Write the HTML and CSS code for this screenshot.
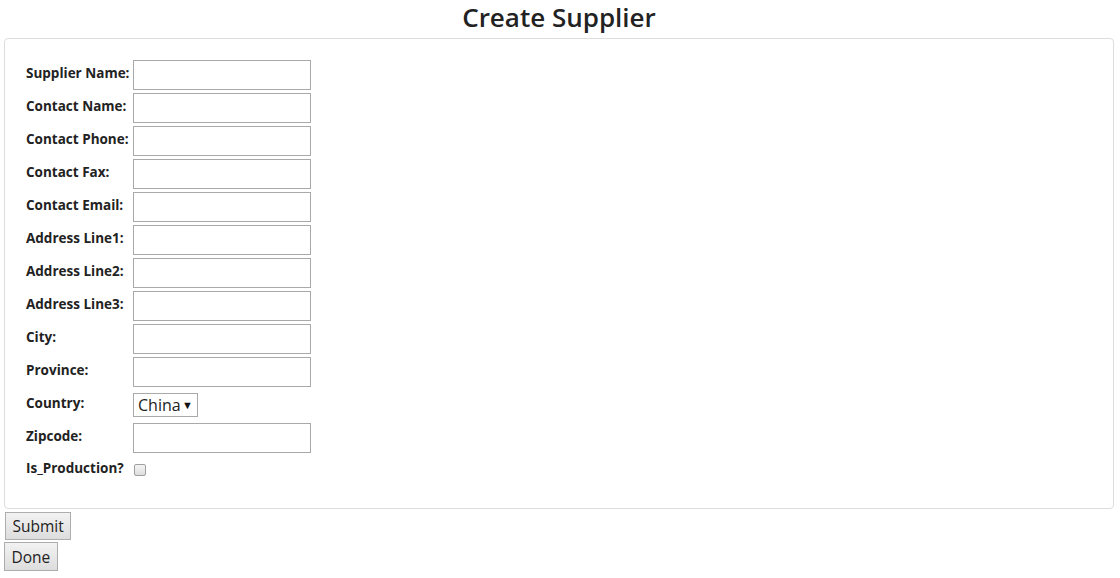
FILE: index.html
```html
<!DOCTYPE html>
<html lang="en">
<head>
    <meta charset="UTF-8">
    <title>Create Supplier</title>
    <link rel="stylesheet" href="styles.css">
</head>
<body>
    <h2 class="page-title">Create Supplier</h2>

    <form id="supplier-form">
        <div class="panel">
            <table class="form-table">
                <tr><td class="lbl">Supplier Name:</td><td><input type="text" class="field"></td></tr>
                <tr><td class="lbl">Contact Name:</td><td><input type="text" class="field"></td></tr>
                <tr><td class="lbl">Contact Phone:</td><td><input type="text" class="field"></td></tr>
                <tr><td class="lbl">Contact Fax:</td><td><input type="text" class="field"></td></tr>
                <tr><td class="lbl">Contact Email:</td><td><input type="text" class="field"></td></tr>
                <tr><td class="lbl">Address Line1:</td><td><input type="text" class="field"></td></tr>
                <tr><td class="lbl">Address Line2:</td><td><input type="text" class="field"></td></tr>
                <tr><td class="lbl">Address Line3:</td><td><input type="text" class="field"></td></tr>
                <tr><td class="lbl">City:</td><td><input type="text" class="field"></td></tr>
                <tr><td class="lbl">Province:</td><td><input type="text" class="field"></td></tr>
                <tr>
                    <td class="lbl">Country:</td>
                    <td>
                        <span class="select-wrap">
                            <select class="country">
                                <option>China</option>
                            </select>
                        </span>
                    </td>
                </tr>
                <tr><td class="lbl">Zipcode:</td><td><input type="text" class="field"></td></tr>
                <tr class="check-row"><td class="lbl">Is_Production?</td><td><input type="checkbox" class="check"></td></tr>
            </table>
        </div>
        <div class="actions">
            <button type="submit" class="btn btn-submit">Submit</button>
            <button type="button" class="btn btn-done">Done</button>
        </div>
    </form>
</body>
</html>
```

FILE: styles.css
```css
body {
    font-family: "Open Sans", "Noto Sans", sans-serif;
    color: #222;
    margin: 0;
    padding: 0 6px 0 4px;
}

.page-title {
    margin: 0;
    padding: 2px 0 6px;
    text-align: center;
    font-size: 26px;
    font-weight: 600;
    line-height: 30px;
    color: #222;
}

.panel {
    border: 1px solid #ddd;
    border-radius: 4px;
    padding: 18px 20px 22px;
}

.form-table {
    border-collapse: separate;
    border-spacing: 0 3px;
}

.form-table td {
    padding: 0;
    height: 30px;
    vertical-align: middle;
}

.form-table td.lbl {
    width: 107px;
    height: 26px;
    padding: 0 0 4px 1px;
    font-size: 13.5px;
    line-height: 16px;
    font-weight: bold;
    white-space: nowrap;
}

.field {
    display: block;
    box-sizing: border-box;
    width: 178px;
    height: 30px;
    margin: 0;
    border: 1px solid #a9a9a9;
    background: #fff;
}

.select-wrap {
    position: relative;
    display: inline-block;
    vertical-align: middle;
}

.country {
    -webkit-appearance: none;
    appearance: none;
    display: block;
    box-sizing: border-box;
    height: 24px;
    width: 65px;
    margin: 0;
    padding: 0 0 0 4px;
    border: 1px solid #a9a9a9;
    background: #fff;
    font-family: "Open Sans", "Noto Sans", sans-serif;
    font-size: 16px;
    color: #222;
}

.select-wrap::after {
    content: "\25BC";
    position: absolute;
    right: 5px;
    top: 4px;
    font-size: 11px;
    color: #111;
    pointer-events: none;
}

.form-table .check-row td {
    height: 27px;
}

.form-table .check-row td.lbl {
    height: 23px;
}

.check {
    -webkit-appearance: none;
    appearance: none;
    display: block;
    width: 12px;
    height: 12px;
    margin: 0 0 0 1px;
    border: 1px solid #a0a0a0;
    border-radius: 2px;
    background: linear-gradient(#f4f4f4, #dedede);
}

.actions {
    padding-top: 3px;
}

.btn {
    display: block;
    box-sizing: border-box;
    height: 28px;
    padding: 0 6.5px;
    border: 1px solid #adadad;
    background: linear-gradient(#f2f2f2, #dddddd);
    font-family: "Open Sans", "Noto Sans", sans-serif;
    font-size: 15.5px;
    color: #222;
}

.btn-submit {
    margin: 0 0 2px 1px;
}

.btn-done {
    margin: 0;
    height: 29px;
}
```
